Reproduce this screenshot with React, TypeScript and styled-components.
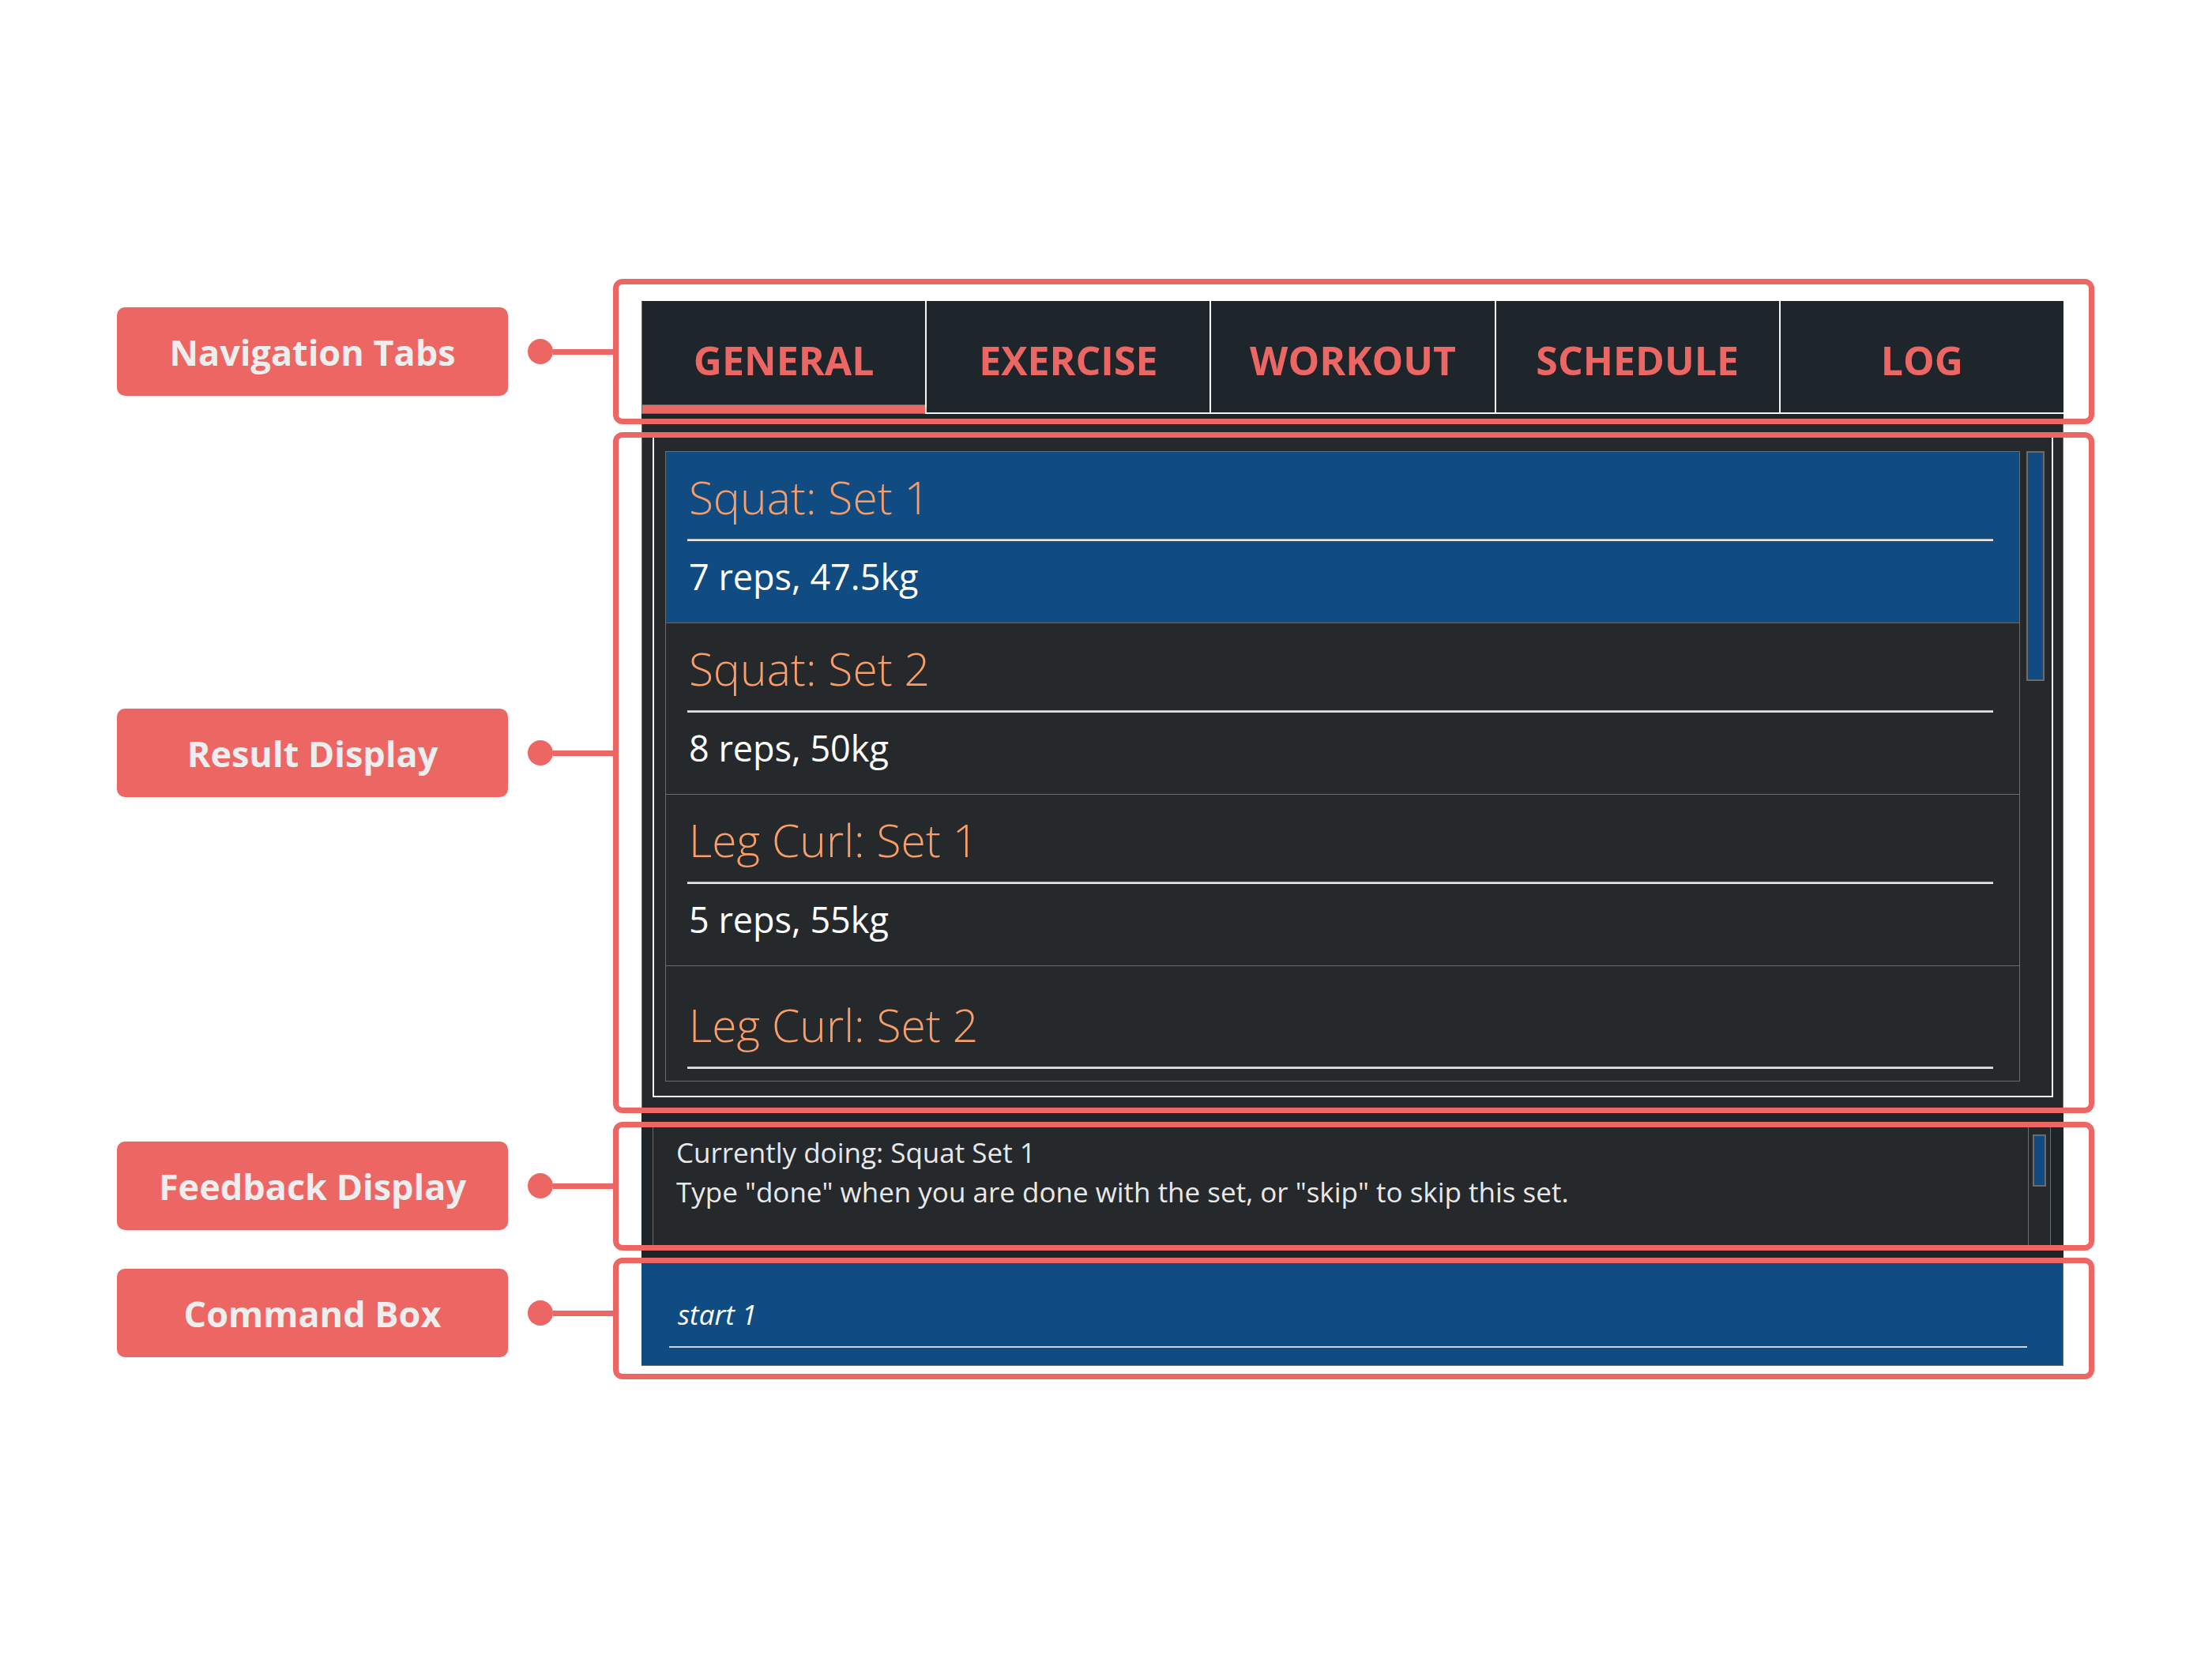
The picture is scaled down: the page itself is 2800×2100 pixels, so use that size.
import React from 'react';
import styled, {createGlobalStyle} from 'styled-components';

const GlobalStyle = createGlobalStyle`
  html, body {
    margin: 0;
    padding: 0;
    background: #ffffff;
  }
  body {
    font-family: "Open Sans", "Liberation Sans", sans-serif;
  }
  * {
    box-sizing: border-box;
  }
`;

const Canvas = styled.div`
  width: 2800px;
  height: 2100px;
  padding: 381px 0 0 148px;
  background: #ffffff;
`;

const Diagram = styled.div`
  display: grid;
  grid-template-columns: 664px 1800px;
`;

const Callout = styled.div<{ $shift: number }>`
  display: flex;
  align-items: center;
  align-self: center;
  margin-bottom: ${p => p.$shift}px;
`;

const Label = styled.div`
  width: 495px;
  height: 112px;
  border-radius: 10px;
  background: #ec6664;
  color: #eeeeee;
  font-size: 45px;
  font-weight: 700;
  display: flex;
  align-items: center;
  justify-content: center;
`;

const Dot = styled.span`
  width: 32px;
  height: 32px;
  margin-left: 25px;
  border-radius: 50%;
  background: #ec6664;
`;

const Wire = styled.span`
  width: 77px;
  height: 7px;
  background: #ec6664;
`;

// annotated part of the app; the red bracket lies over it
const Section = styled.div<{ $box: [number, number, number, number] }>`
  position: relative;
  background: #1d252b;

  &::after {
    content: '';
    position: absolute;
    top: ${p => p.$box[0]}px;
    right: ${p => p.$box[1]}px;
    bottom: ${p => p.$box[2]}px;
    left: ${p => p.$box[3]}px;
    border: 7px solid #ec6664;
    border-radius: 12px;
    z-index: 2;
    pointer-events: none;
  }
`;

const TabBar = styled.div`
  display: flex;
  height: 143px;
  border-left: 1px solid #6b6b6b;
`;

const Tab = styled.div<{ $active?: boolean; $last?: boolean }>`
  flex: 1;
  text-align: center;
  padding-top: 41px;
  background: #1e262b;
  color: #ec6664;
  font-size: 50px;
  font-weight: 700;
  line-height: 68px;
  border-right: ${p => (p.$last ? 'none' : '2px solid #f4f4f4')};
  box-shadow: ${p =>
    p.$active
      ? 'inset 0 -1px 0 #6b6b6b, inset 0 -11px 0 #ec6664, inset 0 -12px 0 #6b6b6b'
      : 'inset 0 -2px 0 #f4f4f4'};
`;

const ResultCell = styled.div`
  padding: 6px 0 8px;
`;

const ResultPanel = styled.div`
  height: 876px;
  padding: 21px 12px 0 13px;
  background: #25292c;
  border-left: 1px solid #6b6b6b;
  border-right: 1px solid #6b6b6b;
`;

const Frame = styled.div`
  display: flex;
  height: 838px;
  padding: 18px 0 18px 14px;
  border: 2px solid #f2f2f2;
`;

const List = styled.div`
  flex: 1;
  border: 1px solid #6b6b6b;
  overflow: hidden;
`;

const Card = styled.div<{ $selected?: boolean; $offset?: number }>`
  height: 217px;
  padding: ${p => 19 + (p.$offset || 0)}px 33px 0 27px;
  background: ${p => (p.$selected ? '#104c82' : '#25292c')};
  border-bottom: 1px solid #6b6b6b;
`;

const CardTitle = styled.div`
  padding-left: 2px;
  color: #f89d68;
  font-size: 57px;
  font-weight: 300;
  line-height: 76px;
`;

const CardRule = styled.div`
  height: 3px;
  margin-top: 15px;
  background: #e2e2e2;
  border-top: 1px solid #b9b9b9;
`;

const CardText = styled.div`
  margin-top: 13px;
  padding-left: 2px;
  color: #ffffff;
  font-size: 45px;
  line-height: 63px;
`;

const Track = styled.div<{ $width: number; $lined?: boolean }>`
  width: ${p => p.$width}px;
  flex: none;
  background: #25292c;
  border-left: ${p => (p.$lined ? '1px solid #6b6b6b' : 'none')};
  border-right: ${p => (p.$lined ? '1px solid #6b6b6b' : 'none')};
`;

const Thumb = styled.div<{ $w: number; $h: number; $top: number; $left: number }>`
  width: ${p => p.$w}px;
  height: ${p => p.$h}px;
  margin: ${p => p.$top}px 0 0 ${p => p.$left}px;
  background: #104c82;
  border: 2px solid #6b6b6b;
`;

const FeedbackCell = styled.div`
  padding: 8px 16px 20px 14px;
`;

const FeedbackPanel = styled.div`
  display: flex;
  height: 156px;
  border-left: 1px solid #6b6b6b;
`;

const FeedbackText = styled.div`
  flex: 1;
  padding: 12px 0 0 29px;
  background: #25292c;
  color: #e8e8e8;
  font-size: 35px;
  line-height: 50px;
`;

const CommandBox = styled.div`
  height: 131px;
  padding: 42px 45px 0 35px;
  background: #104c82;
  border-right: 1px solid #6b6b6b;
  border-bottom: 1px solid #6b6b6b;
`;

const CommandInput = styled.div`
  padding: 0 0 17px 11px;
  color: #ffffff;
  font-size: 35px;
  font-style: italic;
  border-bottom: 2px solid #c9d6e3;
`;

const tabs = ['GENERAL', 'EXERCISE', 'WORKOUT', 'SCHEDULE', 'LOG'];

const sets: { title: string; detail?: string; selected?: boolean; offset?: number }[] = [
    {title: 'Squat: Set 1', detail: '7 reps, 47.5kg', selected: true},
    {title: 'Squat: Set 2', detail: '8 reps, 50kg'},
    {title: 'Leg Curl: Set 1', detail: '5 reps, 55kg'},
    {title: 'Leg Curl: Set 2', offset: 17},
];

function App() {
    return (
        <>
            <GlobalStyle/>
            <Canvas>
                <Diagram>
                    <Callout $shift={15}>
                        <Label>Navigation Tabs</Label>
                        <Dot/>
                        <Wire/>
                    </Callout>
                    <Section $box={[-28, -39, -13, -36]}>
                        <TabBar>
                            {tabs.map((t, i) => (
                                <Tab key={t} $active={i === 0} $last={i === tabs.length - 1}>{t}</Tab>
                            ))}
                        </TabBar>
                    </Section>

                    <Callout $shift={32}>
                        <Label>Result Display</Label>
                        <Dot/>
                        <Wire/>
                    </Callout>
                    <Section $box={[23, -39, 5, -36]}>
                        <ResultCell>
                            <ResultPanel>
                                <Frame>
                                    <List>
                                        {sets.map(s => (
                                            <Card key={s.title} $selected={s.selected} $offset={s.offset}>
                                                <CardTitle>{s.title}</CardTitle>
                                                <CardRule/>
                                                {s.detail && <CardText>{s.detail}</CardText>}
                                            </Card>
                                        ))}
                                    </List>
                                    <Track $width={40}>
                                        <Thumb $w={23} $h={291} $top={0} $left={8}/>
                                    </Track>
                                </Frame>
                            </ResultPanel>
                        </ResultCell>
                    </Section>

                    <Callout $shift={10}>
                        <Label>Feedback Display</Label>
                        <Dot/>
                        <Wire/>
                    </Callout>
                    <Section $box={[6, -39, 15, -36]}>
                        <FeedbackCell>
                            <FeedbackPanel>
                                <FeedbackText>
                                    <div>Currently doing: Squat Set 1</div>
                                    <div>Type "done" when you are done with the set, or "skip" to skip this set.</div>
                                </FeedbackText>
                                <Track $width={29} $lined>
                                    <Thumb $w={17} $h={66} $top={14} $left={5}/>
                                </Track>
                            </FeedbackPanel>
                        </FeedbackCell>
                    </Section>

                    <Callout $shift={3}>
                        <Label>Command Box</Label>
                        <Dot/>
                        <Wire/>
                    </Callout>
                    <Section $box={[-6, -39, -17, -36]}>
                        <CommandBox>
                            <CommandInput>start 1</CommandInput>
                        </CommandBox>
                    </Section>
                </Diagram>
            </Canvas>
        </>
    );
}

export default App;
